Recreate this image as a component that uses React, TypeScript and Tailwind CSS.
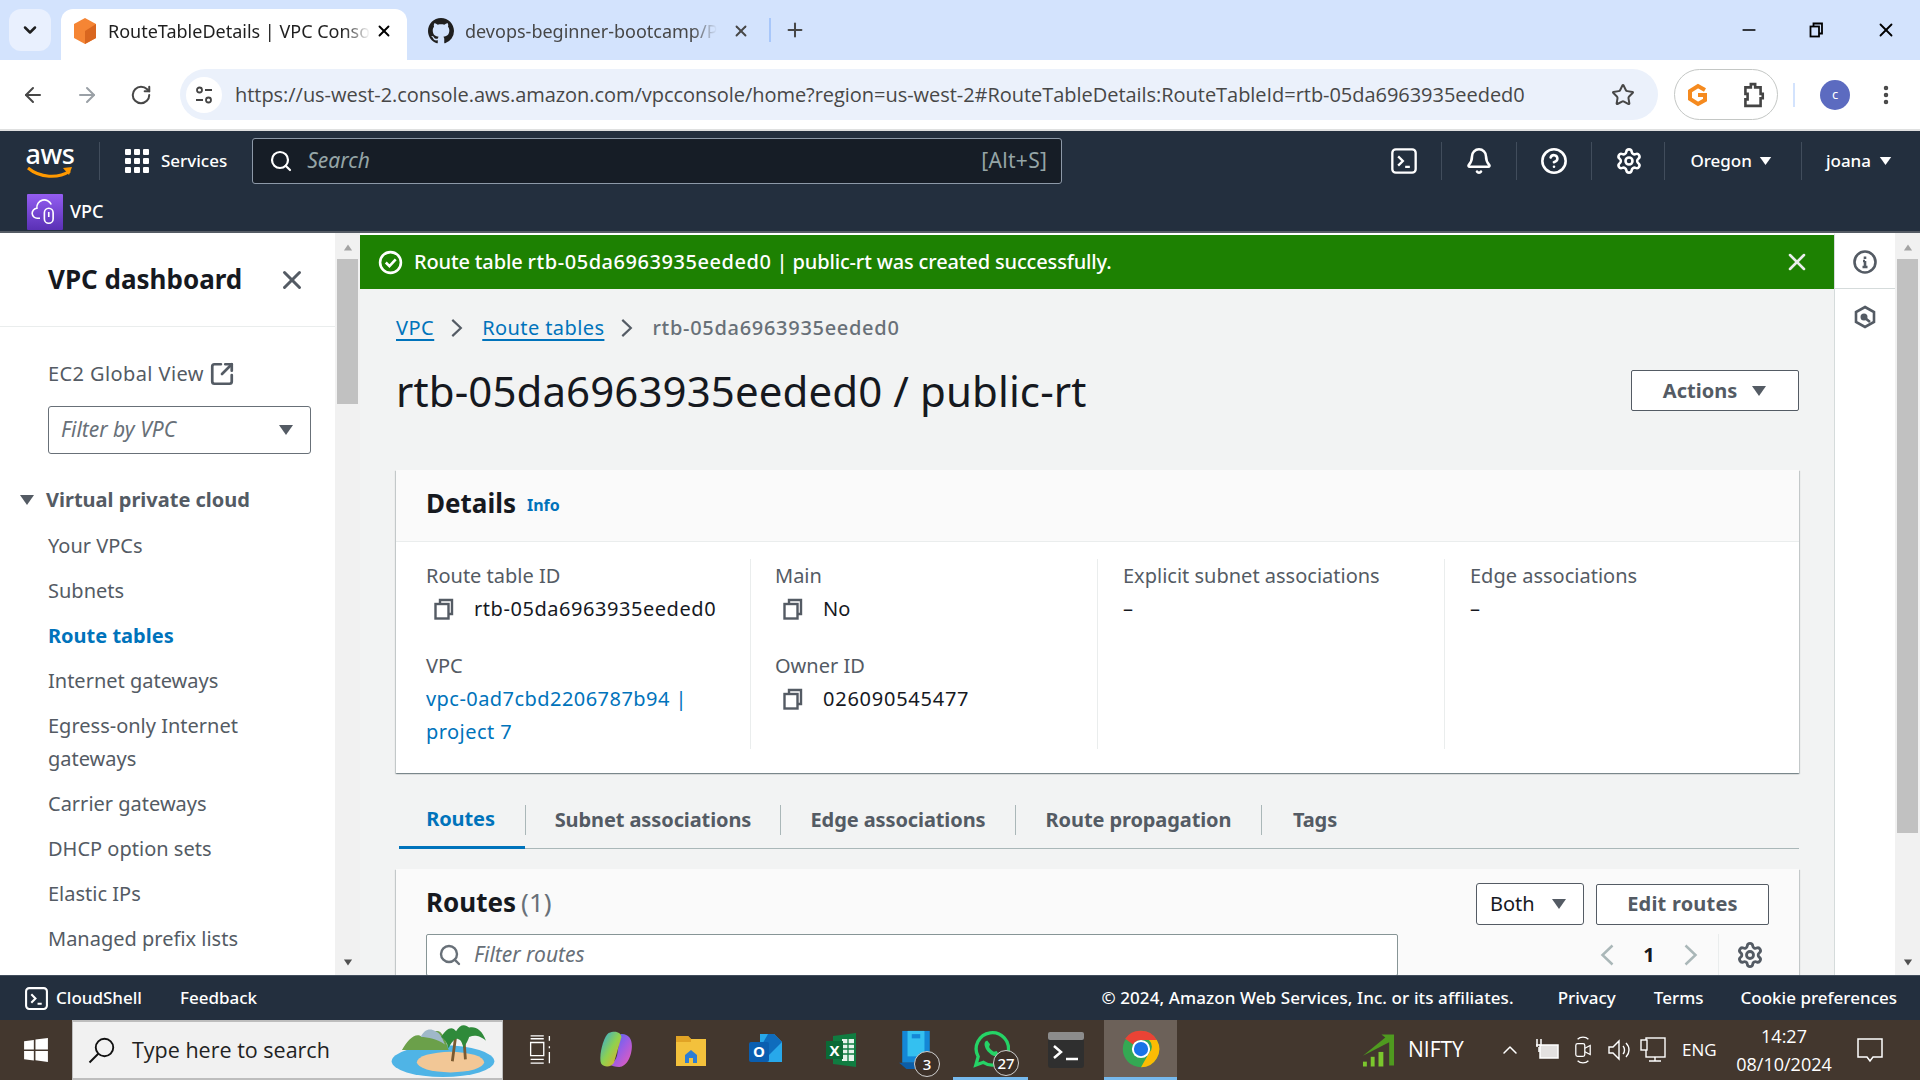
import React from 'react'
import {
  ArrowLeft, ArrowRight, RotateCw, Star, MoreVertical, Search, X, Plus, ChevronDown, Minus,
  Bell, CircleHelp, Settings, SquareArrowOutUpRight, ChevronUp,
} from 'lucide-react'

const Caret = ({ className = '' }: { className?: string }) => (
  <svg viewBox="0 0 16 12" className={className}><path d="M1 1h14L8 11z" fill="currentColor" /></svg>
)

const Chev = ({ dir, className = '' }: { dir: 'l' | 'r'; className?: string }) => (
  <svg viewBox="0 0 14 22" className={className} fill="none" stroke="currentColor" strokeWidth="2.500">
    <path d={dir === 'l' ? 'M12.500 1.500L2.500 11l10 9.500' : 'M1.500 1.500l10 9.500-10 9.500'} />
  </svg>
)

const Copy = () => (
  <svg viewBox="0 0 22 22" className="w-[22px] h-[22px] text-[#545b64]" fill="none" stroke="currentColor" strokeWidth="2.400">
    <path d="M7 5V2h12v14h-3" />
    <rect x="2.500" y="6" width="13" height="14.500" />
  </svg>
)

const TermBox = ({ size }: { size: string }) => (
  <svg viewBox="0 0 24 24" className={size} fill="none" stroke="white" strokeWidth="2">
    <rect x="2" y="2" width="20" height="20" rx="3" />
    <path d="M7 8l4 4-4 4M13 17h4" />
  </svg>
)

function Tabstrip() {
  return (
    <div className="h-[60px] bg-[#d3e3fd] flex items-end pl-[9px] shrink-0">
      <div className="w-[42px] h-[42px] mb-[9px] rounded-xl bg-[#e9f0fe] flex items-center justify-center">
        <ChevronDown className="w-5 h-5 text-[#1f1f1f]" strokeWidth={3} />
      </div>
      <div className="ml-[10px] w-[346px] h-[51px] bg-white rounded-t-xl flex items-center pl-[12px] pb-[7px]">
        <svg viewBox="0 0 24 28" className="w-[24px] h-[28px] shrink-0">
          <path d="M12 1l11 6v14l-11 6-11-6V7z" fill="#f58534" />
          <path d="M12 14l11-7v14l-11 6z" fill="#d9661f" />
        </svg>
        <span className="ml-[11px] w-[262px] overflow-hidden whitespace-nowrap text-[18px] text-[#1f1f1f] [mask-image:linear-gradient(to_right,black_90%,transparent)]">RouteTableDetails | VPC Console</span>
        <X className="w-[18px] h-[18px] ml-[5px] text-black" strokeWidth={2.5} />
      </div>
      <div className="h-[51px] flex items-center ml-[21px] w-[341px] pb-[7px]">
        <svg viewBox="0 0 16 16" className="w-[26px] h-[26px] shrink-0" fill="#1f1f1f">
          <path d="M8 0C3.580 0 0 3.580 0 8c0 3.540 2.290 6.530 5.470 7.590.4.070.55-.17.55-.38 0-.19-.01-.82-.01-1.490-2.010.37-2.530-.49-2.690-.94-.09-.23-.48-.94-.82-1.130-.28-.15-.68-.52-.01-.53.63-.01 1.080.58 1.230.82.720 1.210 1.870.870 2.330.660.070-.520.280-.870.510-1.070-1.780-.2-3.640-.890-3.640-3.950 0-.870.310-1.590.820-2.150-.08-.2-.36-1.020.08-2.120 0 0 .67-.21 2.200.82.640-.18 1.320-.27 2-.27s1.360.09 2 .27c1.530-1.040 2.200-.82 2.200-.82.440 1.100.16 1.920.08 2.120.51.560.82 1.270.82 2.150 0 3.070-1.870 3.750-3.650 3.950.29.250.54.730.54 1.480 0 1.070-.01 1.930-.01 2.200 0 .21.150.46.550.38A8.010 8.010 0 0016 8c0-4.420-3.580-8-8-8z" />
        </svg>
        <span className="ml-[11px] w-[252px] overflow-hidden whitespace-nowrap text-[18px] text-[#474747] [mask-image:linear-gradient(to_right,black_90%,transparent)]">devops-beginner-bootcamp/Project</span>
        <X className="w-[18px] h-[18px] ml-[15px] text-[#474747]" strokeWidth={2.5} />
      </div>
      <div className="h-[24px] w-[2px] bg-[#a8c7fa] mb-[18px]" />
      <Plus className="w-[22px] h-[22px] ml-[13px] mb-[19px] text-[#474747]" strokeWidth={2.2} />
      <div className="flex-1" />
      <div className="h-[60px] flex items-center text-black">
        <Minus className="w-5 h-5 mr-[49px]" strokeWidth={2} />
        <svg viewBox="0 0 16 16" className="w-[16px] h-[16px] mr-[51px]" fill="none" stroke="black" strokeWidth="1.800">
          <rect x="2.500" y="4.500" width="8.500" height="10" /><path d="M5.500 4V1.500H14v10h-3" />
        </svg>
        <X className="w-[22px] h-[22px] mr-[23px]" strokeWidth={2} />
      </div>
    </div>
  )
}

function Toolbar() {
  return (
    <div className="h-[69px] bg-white flex items-center shrink-0 text-[#474747]">
      <ArrowLeft className="w-[24px] h-[24px] ml-[21px]" strokeWidth={2} />
      <ArrowRight className="w-[24px] h-[24px] ml-[30px] text-[#9aa0a6]" strokeWidth={2} />
      <RotateCw className="w-[22px] h-[22px] ml-[31px]" strokeWidth={2.2} />
      <div className="ml-[28px] w-[1478px] h-[51px] bg-[#ebf1fb] rounded-full flex items-center pl-[6px]">
        <div className="w-[36px] h-[36px] bg-white rounded-full flex items-center justify-center">
          <svg viewBox="0 0 20 20" className="w-[20px] h-[20px]" fill="none" stroke="#444" strokeWidth="1.800">
            <circle cx="5.500" cy="5" r="2.500" /><path d="M11 5h7M2 15h7" /><circle cx="14.500" cy="15" r="2.500" />
          </svg>
        </div>
        <span className="ml-[13px] whitespace-nowrap text-[20px] text-[#474747] font-['Open_Sans',sans-serif] tracking-[-0.04px]">https://us-west-2.console.aws.amazon.com/vpcconsole/home?region=us-west-2#RouteTableDetails:RouteTableId=rtb-05da6963935eeded0</span>
        <div className="flex-1" />
        <Star className="w-[24px] h-[24px] mr-[23px]" strokeWidth={2} />
      </div>
      <div className="ml-[16px] w-[104px] h-[51px] rounded-full border border-[#c4c7c5] flex items-center">
        <svg viewBox="0 0 24 24" className="w-[24px] h-[26px] ml-[11px]" fill="none" stroke="#f58a1f" strokeWidth="4">
          <path d="M19 7l-7-4-8 5v8l8 5 7-4v-5h-7" />
        </svg>
        <svg viewBox="0 0 24 24" className="w-[26px] h-[28px] ml-[30px]" fill="none" stroke="#444" strokeWidth="2.400">
          <path d="M5 5h5V2h4v3h5v6h2v4h-2v7H5v-6h2v-5H5z" />
        </svg>
      </div>
      <div className="w-[2px] h-[24px] bg-[#d3e3fd] ml-[15px]" />
      <div className="ml-[25px] w-[30px] h-[30px] rounded-full bg-[#5c6bc0] text-white text-[13px] flex items-center justify-center">c</div>
      <MoreVertical className="w-[24px] h-[24px] ml-[24px]" strokeWidth={2.5} />
    </div>
  )
}

function AwsHeader() {
  const sep = 'w-px h-[38px] bg-[#414d5c] ml-[23px]'
  return (
    <div className="h-[104px] bg-[#232f3e] shrink-0 text-white border-t-2 border-[#dfe0e0] border-b-2 border-b-[#545b64]">
      <div className="h-[59px] flex items-center">
        <div className="ml-[27px] w-[46px] h-[38px] flex flex-col items-center leading-none">
          <span className="text-[27px] font-medium tracking-[-0.5px] leading-[24px]">aws</span>
          <svg viewBox="0 0 46 14" className="w-[46px] h-[14px]" fill="none">
            <path d="M1 2c12 10 30 11 42 3" stroke="#ff9900" strokeWidth="3" />
            <path d="M36 2l9-1-3 8z" fill="#ff9900" />
          </svg>
        </div>
        <div className="w-px h-[38px] bg-[#414d5c] ml-[26px]" />
        <div className="ml-[25px] grid grid-cols-3 gap-[3px]">
          {Array.from({ length: 9 }).map((_, i) => <div key={i} className="w-[6px] h-[6px] bg-white rounded-[1px]" />)}
        </div>
        <span className="ml-[12px] text-[17px] font-medium">Services</span>
        <div className="ml-[25px] w-[810px] h-[46px] bg-[#161d26] rounded-[3px] border border-[#8d99a8] flex items-center">
          <Search className="w-[24px] h-[24px] ml-[16px] text-white" strokeWidth={2.2} />
          <span className="ml-[14px] text-[21px] italic text-[#95a5a6]">Search</span>
          <div className="flex-1" />
          <span className="mr-[14px] text-[21px] tracking-[0.3px] text-[#95a5a6]">[Alt+S]</span>
        </div>
        <div className="flex-1" />
        <TermBox size="w-[28px] h-[28px]" />
        <div className={sep} />
        <Bell className="w-[28px] h-[28px] ml-[23px]" strokeWidth={2.2} />
        <div className={sep} />
        <CircleHelp className="w-[28px] h-[28px] ml-[23px]" strokeWidth={2.2} />
        <div className={sep} />
        <Settings className="w-[28px] h-[28px] ml-[23px]" strokeWidth={2.2} />
        <div className="w-px h-[38px] bg-[#414d5c] ml-[21px]" />
        <span className="ml-[25px] text-[17px] font-medium">Oregon</span>
        <Caret className="w-[13px] h-[10px] ml-[7px]" />
        <div className="w-px h-[38px] bg-[#414d5c] ml-[29px]" />
        <span className="ml-[24px] text-[17px] font-medium">joana</span>
        <Caret className="w-[13px] h-[10px] ml-[8px] mr-[28px]" />
      </div>
      <div className="h-[41px] flex items-start pl-[27px]">
        <div className="w-[36px] h-[36px] mt-[4px] rounded-[1px] bg-gradient-to-b from-[#945df2] to-[#5a30b5] flex items-center justify-center">
          <svg viewBox="0 0 24 24" className="w-[30px] h-[30px]" fill="none" stroke="white" strokeWidth="1.300">
            <path d="M8 17H6a4 4 0 01-.5-8A6 6 0 0117 6" />
            <rect x="11.500" y="9" width="7" height="12" rx="3.500" /><path d="M15 12v4" />
          </svg>
        </div>
        <span className="ml-[7px] mt-[10px] text-[18px] font-medium leading-[22px]">VPC</span>
      </div>
    </div>
  )
}

const navItems = ['Your VPCs', 'Subnets', 'Route tables', 'Internet gateways', 'Egress-only Internet gateways', 'Carrier gateways', 'DHCP option sets', 'Elastic IPs', 'Managed prefix lists']

function Sidebar() {
  return (
    <div className="w-[335px] shrink-0 bg-white overflow-hidden">
      <div className="h-[94px] border-b border-[#eaeded] flex items-center pl-[48px]">
        <span className="text-[26px] font-bold text-[#16191f] w-[229px]">VPC dashboard</span>
        <X className="w-[30px] h-[30px] text-[#545b64]" strokeWidth={2.4} />
      </div>
      <div className="pl-[48px] pt-[30px] flex items-center text-[20px] tracking-[0.4px] text-[#545b64] leading-[33px]">
        EC2 Global View
        <SquareArrowOutUpRight className="w-[26px] h-[26px] ml-[5px]" strokeWidth={2.5} />
      </div>
      <div className="ml-[48px] mt-[16px] w-[263px] h-[48px] rounded-[3px] border border-[#687078] flex items-center justify-between pl-[12px] pr-[16px]">
        <span className="text-[21px] italic text-[#687078]">Filter by VPC</span>
        <Caret className="w-[16px] h-[12px] text-[#545b64]" />
      </div>
      <div className="pl-[19px] mt-[29px] flex items-center h-[33px]">
        <Caret className="w-[16px] h-[12px] text-[#545b64]" />
        <span className="ml-[11px] text-[20px] font-bold text-[#545b64]">Virtual private cloud</span>
      </div>
      <div className="pl-[48px] pr-[20px] pt-[13px] flex flex-col gap-[12px]">
        {navItems.map((n) => (
          <div key={n} className={`text-[20px] leading-[33px] ${n === 'Route tables' ? 'font-bold text-[#0073bb]' : 'text-[#545b64]'}`}>{n}</div>
        ))}
      </div>
    </div>
  )
}

const Scrollbar = ({ thumb }: { thumb: string }) => (
  <div className="w-[25px] shrink-0 bg-[#f1f1f1] flex flex-col items-center text-[#a3a3a3]">
    <Caret className="w-[12px] h-[7px] mt-[11px] rotate-180" />
    <div className={`w-[21px] mt-[8px] bg-[#c1c1c1] ${thumb}`} />
    <div className="flex-1" />
    <Caret className="w-[12px] h-[7px] mb-[9px] text-[#505050]" />
  </div>
)

function Field({ label, value, copy, link, track = '' }: { label: string; value: string; copy?: boolean; link?: boolean; track?: string }) {
  return (
    <div className="text-[20px] leading-[33px]">
      <div className="text-[#545b64]">{label}</div>
      {copy ? (
        <div className={`flex items-center text-[#16191f] ${track}`}>
          <div className="ml-[7px] mr-[19px] flex"><Copy /></div>{value}
        </div>
      ) : (
        <div className={`max-w-[300px] ${track} ${link ? 'text-[#0073bb]' : 'text-[#16191f]'}`}>{value}</div>
      )}
    </div>
  )
}

const cardShadow = 'shadow-[0_1px_1px_0_rgba(0,28,36,0.3),1px_1px_1px_0_rgba(0,28,36,0.15),-1px_1px_1px_0_rgba(0,28,36,0.15)]'

function Main() {
  return (
    <div className="flex-1 min-w-0 overflow-hidden bg-[#f2f3f3] border-r border-[#d5dbdb] border-t-2 border-t-white">
      <div className="h-[54px] bg-[#1d8102] flex items-center pl-[18px] text-white">
        <svg viewBox="0 0 24 24" className="w-[25px] h-[25px]" fill="none" stroke="white" strokeWidth="2.500">
          <circle cx="12" cy="12" r="10" /><path d="M7.500 12l3.500 3.500 6-6.500" />
        </svg>
        <span className="ml-[11px] text-[20px] font-medium tracking-[-0.15px]">Route table <span className="tracking-[0.55px]">rtb-05da6963935eeded0</span> | public-rt was created successfully.</span>
        <div className="flex-1" />
        <X className="w-[28px] h-[28px] mr-[23px] text-[#eaeded]" strokeWidth={2.2} />
      </div>
      <div className="pl-[36px] pr-[35px]">
        <div className="h-[33px] mt-[22px] flex items-center text-[20px]">
          <span className="text-[#0073bb] underline underline-offset-4 tracking-[0.5px]">VPC</span>
          <Chev dir="r" className="w-[12px] h-[20px] ml-[17px] mr-[19px] text-[#545b64]" />
          <span className="text-[#0073bb] underline underline-offset-4 tracking-[0.4px]">Route tables</span>
          <Chev dir="r" className="w-[12px] h-[20px] ml-[17px] mr-[19px] text-[#545b64]" />
          <span className="text-[#687078] font-medium tracking-[0.7px]">rtb-05da6963935eeded0</span>
        </div>
        <div className="flex items-center justify-between mt-[14px] h-[64px] pt-[1px]">
          <h1 className="text-[42px] text-[#16191f] whitespace-nowrap tracking-[0.1px]">rtb-05da6963935eeded0 / public-rt</h1>
          <div className="w-[168px] h-[41px] bg-white border border-[#545b64] rounded-[2px] flex items-center justify-center gap-[14px] text-[#545b64] text-[20px] font-bold">
            Actions <Caret className="w-[16px] h-[12px]" />
          </div>
        </div>
        <div className={`mt-[48px] bg-white ${cardShadow}`}>
          <div className="h-[72px] bg-[#fafafa] border-b border-[#eaeded] flex items-center pl-[30px] pb-[4px]">
            <span className="text-[26px] font-bold text-[#16191f]">Details</span>
            <span className="ml-[11px] mt-[3px] text-[16px] font-bold text-[#0073bb]">Info</span>
          </div>
          <div className="h-[231px] grid grid-cols-[355px_347px_347px_1fr] pt-[17px] pb-[24px]">
            <div className="border-r border-[#eaeded] pl-[30px] flex flex-col gap-[24px]">
              <Field label="Route table ID" value="rtb-05da6963935eeded0" copy track="tracking-[0.55px]" />
              <Field label="VPC" value="vpc-0ad7cbd2206787b94 | project 7" link track="tracking-[0.45px]" />
            </div>
            <div className="border-r border-[#eaeded] pl-[24px] flex flex-col gap-[24px]">
              <Field label="Main" value="No" copy />
              <Field label="Owner ID" value="026090545477" copy track="tracking-[0.75px]" />
            </div>
            <div className="border-r border-[#eaeded] pl-[25px]">
              <Field label="Explicit subnet associations" value="–" />
            </div>
            <div className="pl-[25px]">
              <Field label="Edge associations" value="–" />
            </div>
          </div>
        </div>
        <div className="mt-[17px] h-[59px] ml-[3px] border-b border-[#aab7b8] flex text-[20px] font-bold text-[#545b64] tracking-[-0.1px]">
          <div className="w-[126px] h-[59px] pt-[1px] pr-[3px] border-b-[3px] border-[#0073bb] text-[#0073bb] flex items-center justify-center">Routes</div>
          {[['Subnet associations', 'w-[256px]'], ['Edge associations', 'w-[235px]'], ['Route propagation', 'w-[246px]'], ['Tags', 'w-[106px]']].map(([t, w], i) => (
            <div key={t} className={`${w} flex items-center justify-center h-[59px]`}>
              <div className={`flex items-center justify-center h-[30px] w-full ${i === 3 ? '' : 'border-r'} border-[#aab7b8] ${i === 0 ? 'border-l' : ''}`}>{t}</div>
            </div>
          ))}
        </div>
        <div className={`mt-[20px] bg-[#fafafa] ${cardShadow} h-[140px] pl-[30px] pr-[30px] pt-[14px]`}>
          <div className="flex items-center h-[42px]">
            <span className="text-[26px] font-bold text-[#16191f] mb-[4px]">Routes</span>
            <span className="ml-[5px] text-[26px] text-[#687078] mb-[4px]">(1)</span>
            <div className="flex-1" />
            <div className="w-[108px] h-[42px] bg-white border border-[#545b64] rounded-[3px] flex items-center justify-between pl-[13px] pr-[16px] text-[20px] text-[#16191f]">
              Both <Caret className="w-[16px] h-[12px] text-[#545b64]" />
            </div>
            <div className="ml-[12px] w-[173px] h-[41px] bg-white border border-[#545b64] rounded-[2px] flex items-center justify-center pb-[1px] tracking-[0.2px] text-[20px] font-bold text-[#545b64]">Edit routes</div>
          </div>
          <div className="mt-[9px] flex items-center h-[42px]">
            <div className="w-[972px] h-[42px] bg-white border border-[#879596] rounded-[2px] flex items-center pl-[11px]">
              <Search className="w-[24px] h-[24px] text-[#687078]" strokeWidth={2.4} />
              <span className="ml-[12px] text-[21px] italic text-[#687078]">Filter routes</span>
            </div>
            <div className="flex-1" />
            <Chev dir="l" className="w-[14px] h-[22px] text-[#aab7b8]" />
            <span className="ml-[29px] w-[12px] text-center text-[20px] font-bold text-[#16191f]">1</span>
            <Chev dir="r" className="w-[14px] h-[22px] ml-[29px] text-[#aab7b8]" />
            <div className="w-px h-[42px] bg-[#eaeded] ml-[20px]" />
            <Settings className="w-[28px] h-[28px] ml-[17px] mr-[5px] text-[#545b64]" strokeWidth={2.4} />
          </div>
        </div>
      </div>
    </div>
  )
}

function ToolsRail() {
  return (
    <div className="w-[60px] shrink-0 bg-white text-[#545b64] pt-[2px]">
      <div className="h-[54px] border-b border-[#d5dbdb] flex items-center justify-center">
        <svg viewBox="0 0 24 24" className="w-[24px] h-[24px]" fill="none" stroke="currentColor" strokeWidth="2.600">
          <circle cx="12" cy="12" r="10.500" /><path d="M12 6.500v2.500M12 11v6M9.500 17h5M10 11h2" />
        </svg>
      </div>
      <div className="h-[56px] flex items-center justify-center">
        <svg viewBox="0 0 24 24" className="w-[24px] h-[24px]" fill="none" stroke="currentColor" strokeWidth="2.600">
          <path d="M12 2l9 5v10l-9 5-9-5V7z" /><circle cx="11" cy="12" r="2.200" fill="currentColor" /><path d="M12 13l5 4" />
        </svg>
      </div>
    </div>
  )
}

function Footer() {
  return (
    <div className="h-[45px] bg-[#232f3e] border-t border-[#414d5c] shrink-0 flex items-center text-white text-[17px] font-medium">
      <div className="ml-[24px] flex"><TermBox size="w-[25px] h-[25px]" /></div>
      <span className="ml-[7px]">CloudShell</span>
      <span className="ml-[38px]">Feedback</span>
      <div className="flex-1" />
      <span className="tracking-[0.1px]">© 2024, Amazon Web Services, Inc. or its affiliates.</span>
      <span className="ml-[44px]">Privacy</span>
      <span className="ml-[38px]">Terms</span>
      <span className="ml-[37px] mr-[23px]">Cookie preferences</span>
    </div>
  )
}

const Badge = ({ n, cls }: { n: string; cls: string }) => (
  <div className={`absolute ${cls} w-[26px] h-[26px] rounded-full bg-[#3c3028] border border-[#cfcfcf] text-white text-[15px] font-medium flex items-center justify-center`}>{n}</div>
)

function Taskbar() {
  return (
    <div className="h-[60px] bg-[#43372e] shrink-0 flex items-stretch text-white">
      <div className="w-[72px] flex items-center justify-center">
        <svg viewBox="0 0 24 24" className="w-[26px] h-[26px]" fill="white"><path d="M1 4l9-1.300V11.500H1zM11.500 2.400L23 1v10.500H11.500zM1 13h9v8.800L1 20.500zM11.500 13H23v10l-11.500-1.500z" /></svg>
      </div>
      <div className="w-[431px] bg-[#f1f1f1] border-y-2 border-x border-[#bdbdbd] flex items-center relative">
        <svg viewBox="0 0 24 24" className="w-[30px] h-[30px] ml-[14px]" fill="none" stroke="#111" strokeWidth="1.500">
          <circle cx="14" cy="10" r="7" /><path d="M9 15l-7 7" />
        </svg>
        <span className="ml-[15px] pt-[1px] text-[21.500px] text-[#222] font-['Open_Sans',sans-serif]">Type here to search</span>
        <svg viewBox="0 0 112 60" className="absolute right-[3px] top-0 w-[112px] h-[56px]">
          <ellipse cx="56" cy="42" rx="55" ry="17" fill="#4fb4e6" />
          <ellipse cx="64" cy="43" rx="36" ry="11" fill="#f2c796" />
          <path d="M12 30c6-10 14-20 22-14 4-6 8-8 14-6 6-2 10 6 14 20z" fill="#6ba04a" />
          <path d="M32 16c4-8 10-10 16-6 6 2 8 10 10 14-8-6-18-8-26-8z" fill="#9fb8c9" />
          <path d="M66 42l4-30M80 40l-2-28" stroke="#7a5a30" strokeWidth="3" fill="none" />
          <path d="M54 16c6-10 12-12 16-6 4-8 10-8 14-4 6-2 14 2 18 14-8-6-12-6-18-4-2 6-4 8-6 12-2-8-4-10-8-10-4 2-6 6-8 10-2-6-4-10-8-12z" fill="#2f8a3a" />
        </svg>
      </div>
      <div className="w-[74px] flex items-center justify-center">
        <svg viewBox="0 0 24 32" className="w-[24px] h-[30px]" fill="none" stroke="white" strokeWidth="1.400">
          <path d="M2 1h14M2 4h14M2 8h14v14H2zM2 26h14M2 30h14M22 1v5M22 12v2M22 18v12" />
        </svg>
      </div>
      {/* pinned apps */}
      <div className="w-[76px] flex items-center justify-center">
        <svg viewBox="0 0 34 36" className="w-[36px] h-[38px]">
          <defs><linearGradient id="cp" x1="0" y1="0" x2="1" y2="1"><stop offset="0" stopColor="#2aa7e8" /><stop offset=".5" stopColor="#8fd14f" /><stop offset="1" stopColor="#f5a623" /></linearGradient>
            <linearGradient id="cp2" x1="0" y1="0" x2="1" y2="1"><stop offset="0" stopColor="#3b6ff0" /><stop offset=".5" stopColor="#9b5de5" /><stop offset="1" stopColor="#f15bb5" /></linearGradient></defs>
          <path d="M22 3c7-1 11 4 11 11 0 10-5 20-12 20-4 0-7-1-9-2 4-2 6-5 7-9z" fill="url(#cp2)" />
          <path d="M11 2c7-3 12 0 12 4l-7 24c-2 4-9 5-12 1-3-6 2-26 7-29z" fill="url(#cp)" />
        </svg>
      </div>
      <div className="w-[75px] flex items-center justify-center">
        <svg viewBox="0 0 32 34" className="w-[32px] h-[36px]">
          <path d="M1 3h12l3 3h15v27H1z" fill="#f3c13c" /><path d="M1 3h12l3 3v3H1z" fill="#e1a325" />
          <path d="M10 22l6-5 6 5v8H10z" fill="#2d7ed3" /><rect x="14" y="25" width="4" height="5" fill="#f3c13c" />
        </svg>
      </div>
      <div className="w-[75px] flex items-center justify-center">
        <svg viewBox="0 0 36 36" className="w-[36px] h-[36px]">
          <path d="M12 2h14l8 8v20H12z" fill="#28a8ea" /><path d="M20 2h6l8 8-14 14-8-8z" fill="#0f6cbd" />
          <rect x="1" y="10" width="20" height="20" rx="2" fill="#0a5eb0" />
          <text x="11" y="25" textAnchor="middle" fontSize="15" fontWeight="700" fill="white" fontFamily="'Open Sans',sans-serif">O</text>
        </svg>
      </div>
      <div className="w-[75px] flex items-center justify-center">
        <svg viewBox="0 0 32 36" className="w-[32px] h-[36px]">
          <path d="M8 4l23-3v34L8 32z" fill="#107c41" />
          <rect x="17" y="7" width="12" height="22" fill="#e6f3ec" /><path d="M17 12h12M17 17h12M17 22h12M23 7v22" stroke="#107c41" strokeWidth="1.300" />
          <rect x="1" y="9" width="17" height="18" fill="#0b6a36" />
          <text x="9.500" y="24" textAnchor="middle" fontSize="15" fontWeight="700" fill="white" fontFamily="'Open Sans',sans-serif">X</text>
        </svg>
      </div>
      <div className="w-[75px] flex items-center justify-center relative">
        <svg viewBox="0 0 34 40" className="w-[36px] h-[44px]">
          <path d="M4 2h26v30H4z" fill="#1487d6" /><path d="M9 2h16v24H9z" fill="#34c0f0" /><rect x="13" y="5" width="8" height="4" fill="#1487d6" />
          <path d="M1 32h22v6H8z" fill="#0c5ea8" />
        </svg>
        <Badge n="3" cls="right-[13px] bottom-[3px]" />
      </div>
      <div className="w-[75px] flex items-center justify-center relative border-b-[3px] border-[#76b9ed]">
        <svg viewBox="0 0 40 40" className="w-[38px] h-[40px]" fill="none" stroke="#25d366" strokeWidth="3.500">
          <path d="M4 37l2.500-9A17 17 0 1112 34z" />
          <path d="M14 12c-2 3 0 8 4 12s8 5 11 3l-3-5-3 1c-2-1-4-3-5-5l1-3-3-4z" fill="#25d366" stroke="none" />
        </svg>
        <Badge n="27" cls="right-[9px] bottom-[1px]" />
      </div>
      <div className="w-[76px] flex items-center justify-center">
        <svg viewBox="0 0 36 36" className="w-[36px] h-[36px]">
          <rect x="0" y="0" width="36" height="36" rx="3" fill="#2f2f2f" /><rect x="0" y="0" width="36" height="8" rx="2" fill="#8c8c8c" />
          <path d="M6 14l7 6-7 6" stroke="white" strokeWidth="2.500" fill="none" /><path d="M18 27h12" stroke="white" strokeWidth="2.500" />
        </svg>
      </div>
      <div className="w-[73px] bg-[#6c6159] border-b-[3px] border-[#76b9ed] flex items-center justify-center">
        <svg viewBox="0 0 48 48" className="w-[38px] h-[38px]">
          <circle cx="24" cy="24" r="23" fill="#34a853" />
          <path d="M24 1a23 23 0 0120 11.500H24a11.500 11.500 0 00-10 5.800L4 11A23 23 0 0124 1z" fill="#ea4335" />
          <path d="M44 12.500A23 23 0 0124 47l10-17.500a11.500 11.500 0 000-17z" fill="#fbbc04" />
          <circle cx="24" cy="24" r="11.500" fill="white" /><circle cx="24" cy="24" r="9" fill="#1a73e8" />
        </svg>
      </div>
      <div className="flex-1" />
      <div className="flex items-center pr-[13px]">
        <svg viewBox="0 0 34 36" className="w-[33px] h-[36px] mr-[13px]">
          <path d="M1 24L24 5l-4-3h13v32h-5V10z" fill="#4f9a1f" />
          <rect x="1" y="30" width="4" height="5" fill="#7bc62d" /><rect x="9" y="25" width="4" height="10" fill="#7bc62d" /><rect x="17" y="20" width="5" height="15" fill="#7bc62d" />
        </svg>
        <span className="text-[21px] font-['Open_Sans',sans-serif] w-[56px]">NIFTY</span>
        <ChevronUp className="w-[24px] h-[24px] ml-[34px]" strokeWidth={1.500} />
        <svg viewBox="0 0 26 26" className="w-[26px] h-[26px] ml-[12px]" fill="none" stroke="white" strokeWidth="1.500">
          <rect x="6" y="8" width="18" height="13" fill="white" fillOpacity=".85" /><path d="M3 2v8M7 2v5M2 8h6M5 10v5" />
        </svg>
        <svg viewBox="0 0 20 32" className="w-[18px] h-[30px] ml-[14px]" fill="none" stroke="white" strokeWidth="1.400">
          <path d="M4 4c3-3 9-3 12 0M4 28c3 3 9 3 12 0" /><rect x="2" y="9" width="10" height="14" rx="2" /><path d="M12 14l6-3v10l-6-3" />
        </svg>
        <svg viewBox="0 0 26 26" className="w-[26px] h-[26px] ml-[15px]" fill="none" stroke="white" strokeWidth="1.400">
          <path d="M2 10h4l6-6v18l-6-6H2zM16 9c2 2 2 6 0 8M19 6c4 4 4 10 0 14" />
        </svg>
        <svg viewBox="0 0 26 26" className="w-[26px] h-[28px] ml-[7px]" fill="none" stroke="white" strokeWidth="1.400">
          <rect x="6" y="1" width="19" height="19" /><path d="M15 20v4M9 24h12" /><rect x="1" y="3" width="6" height="10" fill="#43372e" />
        </svg>
        <span className="ml-[16px] w-[36px] text-[17px] font-['Open_Sans',sans-serif]">ENG</span>
        <div className="ml-[16px] w-[100px] flex flex-col items-center text-[18px] leading-[28px] font-['Open_Sans',sans-serif]">
          <span>14:27</span><span>08/10/2024</span>
        </div>
        <svg viewBox="0 0 26 26" className="w-[26px] h-[26px] ml-[23px]" fill="none" stroke="white" strokeWidth="1.500">
          <path d="M1 2h24v18H16l-3 4-3-4H1z" />
        </svg>
        <div className="w-[24px]" />
      </div>
    </div>
  )
}

export default function App() {
  return (
    <div className="w-[1920px] h-[1080px] overflow-hidden flex flex-col bg-white font-['Noto_Sans',sans-serif]">
      <Tabstrip />
      <Toolbar />
      <AwsHeader />
      <div className="flex-1 min-h-0 flex">
        <Sidebar />
        <Scrollbar thumb="h-[145px]" />
        <Main />
        <ToolsRail />
        <Scrollbar thumb="h-[574px]" />
      </div>
      <Footer />
      <Taskbar />
    </div>
  )
}
